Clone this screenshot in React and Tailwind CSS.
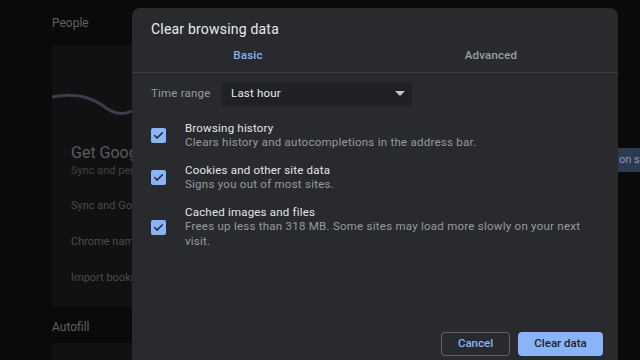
import React from "react";

function Check() {
  return (
    <div className="w-[15px] h-[15px] rounded-[2px] bg-[#8ab4f8] flex items-center justify-center shrink-0">
      <svg width="11" height="11" viewBox="0 0 24 24" fill="none">
        <path d="M4 12.5l5 5L20 6.5" stroke="#202124" strokeWidth="3.2" strokeLinecap="square" />
      </svg>
    </div>
  );
}

function Item({ title, desc }) {
  return (
    <div className="flex items-center">
      <div className="w-[34px] flex items-center">
        <Check />
      </div>
      <div className="flex flex-col">
        <div className="text-[11.5px] leading-[14px] text-[#e3e5e8] tracking-[0.2px]">{title}</div>
        <div className="text-[11.5px] leading-[15px] text-[#969ba1] tracking-[0.25px]">{desc}</div>
      </div>
    </div>
  );
}

export default function App() {
  return (
    <div
      className="relative w-[640px] h-[360px] overflow-hidden bg-[#0a0a0b]"
      style={{ fontFamily: "Roboto, 'Noto Sans', sans-serif" }}
    >
      {/* background page */}
      <div className="pl-[52px] pt-[15px] flex flex-col">
        <div className="text-[12px] leading-[16px] text-[#5f6063]">People</div>
        <div className="mt-[14px] w-[560px] h-[262px] bg-[#111113] rounded-[4px] relative">
          <svg className="absolute left-0 top-[40px]" width="120" height="40" viewBox="0 0 120 40">
            <path d="M0 12 C20 8 36 10 50 20 C62 30 72 30 80 26" stroke="#3a3e4a" strokeWidth="3" fill="none" />
          </svg>
          <div className="pl-[19px] pt-[98px] flex flex-col">
            <div className="text-[16px] leading-[20px] text-[#5a5b5e]">Get Google smarts</div>
            <div className="text-[11px] leading-[14px] text-[#3f4043] mt-[1px]">Sync and personalize</div>
            <div className="text-[11px] leading-[14px] text-[#4a4b4e] mt-[21px]">Sync and Google services</div>
            <div className="text-[11px] leading-[14px] text-[#4a4b4e] mt-[22px]">Chrome name and picture</div>
            <div className="text-[11px] leading-[14px] text-[#4a4b4e] mt-[22px]">Import bookmarks and settings</div>
          </div>
        </div>
        <div className="mt-[12px] text-[12px] leading-[16px] text-[#5f6063]">Autofill</div>
        <div className="mt-[8px] w-[560px] h-[40px] bg-[#111113] rounded-[4px]" />
      </div>

      {/* right side partial button */}
      <div className="absolute left-[612px] top-[148px] w-[60px] h-[24px] bg-[#2c3a52] text-[11px] text-[#8c9ab3] leading-[24px] pl-[7px] whitespace-nowrap overflow-hidden">
        on sync
      </div>

      {/* dialog */}
      <div className="absolute left-[132px] top-[8px] w-[486px] h-[370px] bg-[#292a2d] rounded-[8px] flex flex-col">
        <div className="pl-[19px] pt-[12px] text-[14px] leading-[18px] text-[#e8eaed] tracking-[0.2px]">Clear browsing data</div>
        <div className="flex mt-[9px] h-[26px] border-b border-[#3c3d40]">
          <div className="w-[232px] flex justify-center pt-[0px] text-[11.5px] font-medium text-[#8ab4f8] tracking-[0.2px]">Basic</div>
          <div className="flex-1 flex justify-center pt-[0px] text-[11.5px] font-medium text-[#9aa0a6] tracking-[0.2px]">Advanced</div>
        </div>
        <div className="flex items-center pl-[19px] mt-[9px]">
          <div className="w-[71px] text-[11.5px] text-[#969ba1] tracking-[0.2px]">Time range</div>
          <div className="w-[190px] h-[24px] bg-[#202124] rounded-[3px] flex items-center justify-between pl-[9px] pr-[7px]">
            <span className="text-[11.5px] text-[#e8eaed] tracking-[0.2px]">Last hour</span>
            <svg width="10" height="6" viewBox="0 0 10 6">
              <path d="M0 0h10L5 5z" fill="#c4c7c9" />
            </svg>
          </div>
        </div>
        <div className="pl-[19px] mt-[15px] flex flex-col gap-[13px]">
          <Item title="Browsing history" desc="Clears history and autocompletions in the address bar." />
          <Item title="Cookies and other site data" desc="Signs you out of most sites." />
          <div className="flex items-center">
            <div className="w-[34px] flex items-center">
              <Check />
            </div>
            <div className="flex flex-col">
              <div className="text-[11.5px] leading-[14px] text-[#e3e5e8] tracking-[0.2px]">Cached images and files</div>
              <div className="text-[11.5px] leading-[15px] text-[#969ba1] w-[410px] tracking-[0.25px]">
                Frees up less than 318 MB. Some sites may load more slowly on your next visit.
              </div>
            </div>
          </div>
        </div>
        <div className="flex justify-end gap-[8px] pr-[15px] mt-[83px]">
          <button className="w-[69px] h-[24px] rounded-[4px] border border-[#5f6368] text-[11.5px] font-medium text-[#8ab4f8]">
            Cancel
          </button>
          <button className="w-[85px] h-[24px] rounded-[4px] bg-[#8ab4f8] text-[11.5px] font-medium text-[#202124]">
            Clear data
          </button>
        </div>
      </div>
    </div>
  );
}
